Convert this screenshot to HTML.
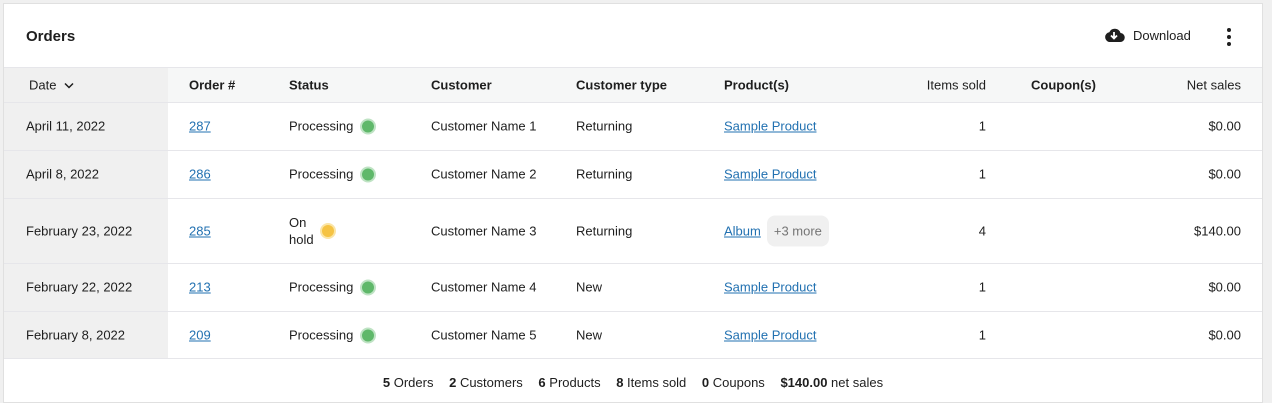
<!DOCTYPE html>
<html><head><style>
body{margin:0;background:#f0f0f0;font-family:"Liberation Sans",sans-serif;font-size:13px;color:#1e1e1e;width:1272px;height:400px;overflow:hidden;position:relative}
.card{position:absolute;left:3px;top:3px;width:1260px;height:400px;background:#fff;border:1px solid #e0e0e0;box-sizing:border-box}
.title{position:absolute;left:22px;top:24px;font-size:15px;font-weight:bold}
.dl{position:absolute;left:1099px;top:23px;display:flex;align-items:center;gap:8px}
.dots{position:absolute;left:1223px;top:24px;width:4px}
.dots i{display:block;width:4px;height:4px;border-radius:2px;background:#1e1e1e;margin-bottom:3px}
.row{position:absolute;left:0;width:1258px;border-top:1px solid #e6e6ea}
.row .dcell{position:absolute;left:0;top:0;bottom:0;width:164px;background:#f0f0f0}
.c{position:absolute;transform:translateY(-50%);white-space:nowrap}
.b{font-weight:bold}
a{color:#2271b1;text-decoration:underline}
.dot{display:inline-block;width:12px;height:12px;border-radius:6px;background:#5fb86a;box-shadow:0 0 0 2px #bfe3c4;vertical-align:middle;margin-left:9px;margin-top:-2px}
.y{background:#f5c344;box-shadow:0 0 0 2px #fbe5a6}
.more{display:inline-block;background:#f0f0f0;color:#757575;border-radius:8px;padding:8px 7px;margin-left:6px}
.foot{position:absolute;left:0;width:1258px;top:354px;border-top:1px solid #e6e6ea;text-align:center;padding-top:16px}
.foot span{margin:0 6px}
</style></head><body>
<div class="card">
<div class="title">Orders</div>
<div class="dl"><svg width="22" height="16" viewBox="0 0 22 16"><path d="M6 15h11a4.5 4.5 0 0 0 .5-9A6 6 0 0 0 6.3 5.2 5 5 0 0 0 6 15z" fill="#1e1e1e"/><path d="M11 5v6M8 8.5l3 3 3-3" stroke="#fff" stroke-width="1.8" fill="none"/></svg><span>Download</span></div>
<div class="dots"><i></i><i></i><i></i></div>

<div class="row" style="top:63px;height:35px;background:#f6f7f7"><div class="dcell"></div>
<div class="c" style="left:25px;top:17px">Date <svg width="10" height="7" viewBox="0 0 10 7" style="margin-left:4px"><path d="M1 1l4 4 4-4" stroke="#1e1e1e" stroke-width="1.5" fill="none"/></svg></div>
<div class="c b" style="left:185px;top:17px">Order #</div>
<div class="c b" style="left:285px;top:17px">Status</div>
<div class="c b" style="left:427px;top:17px">Customer</div>
<div class="c b" style="left:572px;top:17px">Customer type</div>
<div class="c b" style="left:720px;top:17px">Product(s)</div>
<div class="c" style="right:276px;top:17px">Items sold</div>
<div class="c b" style="left:1027px;top:17px">Coupon(s)</div>
<div class="c" style="right:21px;top:17px">Net sales</div>
</div>

<div class="row" style="top:98px;height:48px"><div class="dcell"></div>
<div class="c" style="left:22px;top:23px">April 11, 2022</div>
<div class="c" style="left:185px;top:23px"><a>287</a></div>
<div class="c" style="left:285px;top:23px">Processing<span class="dot"></span></div>
<div class="c" style="left:427px;top:23px">Customer Name 1</div>
<div class="c" style="left:572px;top:23px">Returning</div>
<div class="c" style="left:720px;top:23px"><a>Sample Product</a></div>
<div class="c" style="right:276px;top:23px">1</div>
<div class="c" style="right:21px;top:23px">$0.00</div>
</div>

<div class="row" style="top:146px;height:48px"><div class="dcell"></div>
<div class="c" style="left:22px;top:23px">April 8, 2022</div>
<div class="c" style="left:185px;top:23px"><a>286</a></div>
<div class="c" style="left:285px;top:23px">Processing<span class="dot"></span></div>
<div class="c" style="left:427px;top:23px">Customer Name 2</div>
<div class="c" style="left:572px;top:23px">Returning</div>
<div class="c" style="left:720px;top:23px"><a>Sample Product</a></div>
<div class="c" style="right:276px;top:23px">1</div>
<div class="c" style="right:21px;top:23px">$0.00</div>
</div>

<div class="row" style="top:194px;height:65px"><div class="dcell"></div>
<div class="c" style="left:22px;top:32px">February 23, 2022</div>
<div class="c" style="left:185px;top:32px"><a>285</a></div>
<div class="c" style="left:285px;top:32px;line-height:17px">On<br>hold</div><span class="dot y" style="position:absolute;left:318px;top:26px;margin:0"></span>
<div class="c" style="left:427px;top:32px">Customer Name 3</div>
<div class="c" style="left:572px;top:32px">Returning</div>
<div class="c" style="left:720px;top:32px"><a>Album</a><span class="more">+3 more</span></div>
<div class="c" style="right:276px;top:32px">4</div>
<div class="c" style="right:21px;top:32px">$140.00</div>
</div>

<div class="row" style="top:259px;height:48px"><div class="dcell"></div>
<div class="c" style="left:22px;top:23px">February 22, 2022</div>
<div class="c" style="left:185px;top:23px"><a>213</a></div>
<div class="c" style="left:285px;top:23px">Processing<span class="dot"></span></div>
<div class="c" style="left:427px;top:23px">Customer Name 4</div>
<div class="c" style="left:572px;top:23px">New</div>
<div class="c" style="left:720px;top:23px"><a>Sample Product</a></div>
<div class="c" style="right:276px;top:23px">1</div>
<div class="c" style="right:21px;top:23px">$0.00</div>
</div>

<div class="row" style="top:307px;height:47px"><div class="dcell"></div>
<div class="c" style="left:22px;top:23px">February 8, 2022</div>
<div class="c" style="left:185px;top:23px"><a>209</a></div>
<div class="c" style="left:285px;top:23px">Processing<span class="dot"></span></div>
<div class="c" style="left:427px;top:23px">Customer Name 5</div>
<div class="c" style="left:572px;top:23px">New</div>
<div class="c" style="left:720px;top:23px"><a>Sample Product</a></div>
<div class="c" style="right:276px;top:23px">1</div>
<div class="c" style="right:21px;top:23px">$0.00</div>
</div>

<div class="foot"><span><b>5</b> Orders</span> <span><b>2</b> Customers</span> <span><b>6</b> Products</span> <span><b>8</b> Items sold</span> <span><b>0</b> Coupons</span> <span><b>$140.00</b> net sales</span></div>
</div>
</body></html>
